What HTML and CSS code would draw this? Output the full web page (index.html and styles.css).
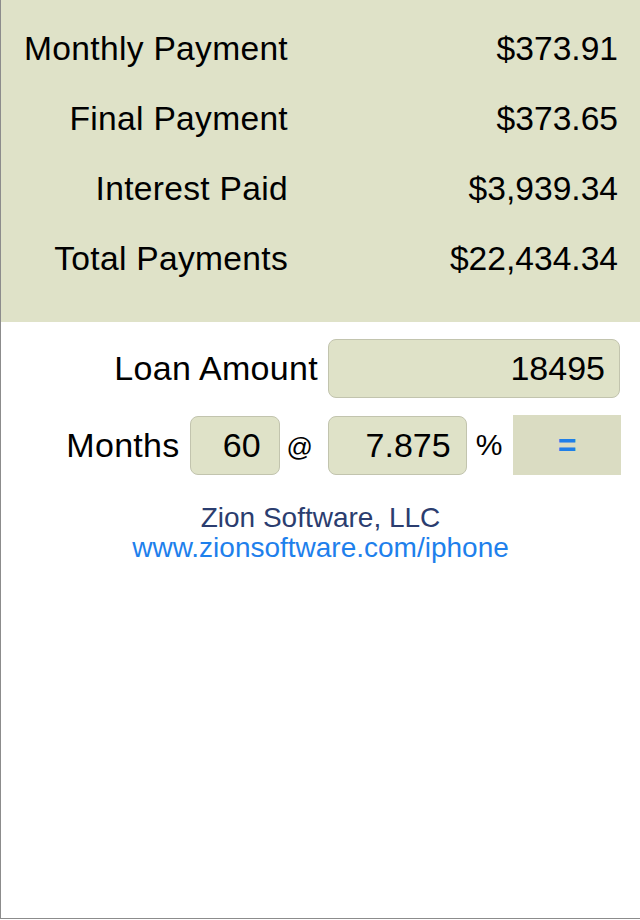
FILE: index.html
```html
<html>
	<head>
		<link rel="stylesheet" href="styles.css">
	</head>
	<body>
		<div class="screen">
			<div class="results">
				<span class="label">Monthly Payment</span>
				<span class="value">$373.91</span>
				<span class="label">Final Payment</span>
				<span class="value">$373.65</span>
				<span class="label">Interest Paid</span>
				<span class="value">$3,939.34</span>
				<span class="label">Total Payments</span>
				<span class="value">$22,434.34</span>
			</div>
			<div class="inputs">
				<div class="cell left">
					<span class="caption">Loan Amount</span>
				</div>
				<div class="cell">
					<div class="field amount">18495</div>
				</div>
				<div class="cell left">
					<span class="caption">Months</span>
					<div class="field months">60</div>
					<span class="caption at">@</span>
				</div>
				<div class="cell">
					<div class="field rate">7.875</div>
					<span class="caption pct">%</span>
					<div class="calc">=</div>
				</div>
			</div>
			<div class="footer">
				<div class="company">Zion Software, LLC</div>
				<div class="link">www.zionsoftware.com/iphone</div>
			</div>
		</div>
	</body>
</html>
```

FILE: styles.css
```css
body {
	margin: 0;
	background: white;
	font-family: "Liberation Sans", Arial, sans-serif;
	color: black;
}

.screen {
	width: 640px;
	height: 919px;
	box-sizing: border-box;
	border-left: 1px solid #8c8c8c;
	border-bottom: 1px solid #8c8c8c;
	overflow: hidden;
}

.results {
	height: 322px;
	box-sizing: border-box;
	padding-top: 14px;
	padding-right: 22px;
	background-color: #dfe2c8;
	display: grid;
	grid-template-columns: 287px 1fr;
	grid-auto-rows: 70px;
	font-size: 33.6px;
	line-height: 70px;
}

.label,
.value {
	text-align: right;
	white-space: nowrap;
}

.label {
	letter-spacing: 0.3px;
}

.inputs {
	display: grid;
	grid-template-columns: 317px 293px;
	column-gap: 10px;
	row-gap: 17px;
	padding-top: 17px;
	font-size: 34px;
}

.cell {
	display: flex;
	align-items: center;
}

.cell.left {
	justify-content: flex-end;
}

.caption {
	letter-spacing: 0.3px;
}

.field {
	height: 59px;
	box-sizing: border-box;
	border: 1px solid #c2c4ae;
	border-radius: 8px;
	background-color: #dfe2c8;
	display: flex;
	align-items: center;
	justify-content: flex-end;
	padding-right: 14px;
}

.amount {
	width: 292px;
}

.months {
	width: 90px;
	margin-left: 10px;
	padding-right: 18px;
}

.at {
	font-size: 26px;
	letter-spacing: 0;
	margin-left: 7px;
	margin-right: 5px;
	padding-top: 4px;
}

.rate {
	width: 139px;
	padding-right: 15px;
}

.pct {
	margin-left: 9px;
	font-size: 30px;
	letter-spacing: 0;
}

.calc {
	width: 108px;
	height: 60px;
	margin-left: 11px;
	background-color: #dadcc2;
	color: #1f7fe8;
	font-size: 32px;
	font-weight: bold;
	display: flex;
	align-items: center;
	justify-content: center;
}

.footer {
	margin-top: 28px;
	text-align: center;
	font-size: 28px;
	line-height: 30px;
}

.company {
	color: #2b3d6f;
}

.link {
	color: #1e80ec;
}
```
